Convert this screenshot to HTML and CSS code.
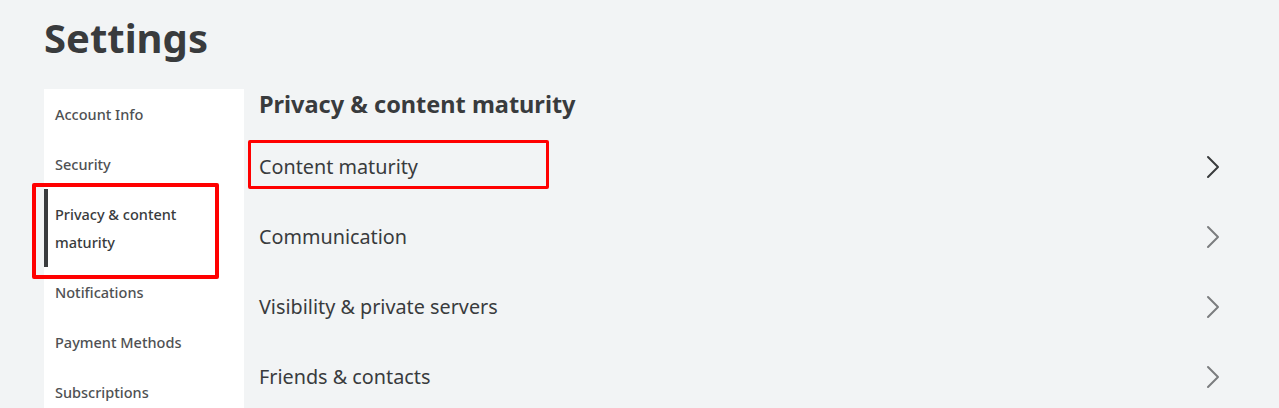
FILE: index.html
```html
<!DOCTYPE html>
<html lang="en">
<head>
  <meta charset="UTF-8" />
  <title>Settings</title>
  <link rel="stylesheet" href="styles.css">
</head>
<body>
  <div class="page">
    <h1 class="title">Settings</h1>

    <div class="layout">
      <ul class="menu">
        <li class="menu-item">Account Info</li>
        <li class="menu-item">Security</li>
        <li class="menu-item active">Privacy &amp; content maturity
          <span class="mark mark-side"></span>
        </li>
        <li class="menu-item">Notifications</li>
        <li class="menu-item">Payment Methods</li>
        <li class="menu-item">Subscriptions</li>
      </ul>

      <div class="main">
        <h2 class="section-title">Privacy &amp; content maturity</h2>

        <div class="row hover">
          <span class="row-label">Content maturity<span class="mark mark-row"></span></span>
          <svg class="chevron" viewBox="0 0 14 24"><path d="M2 2 L12 12 L2 22" /></svg>
        </div>
        <div class="row">
          <span class="row-label">Communication</span>
          <svg class="chevron" viewBox="0 0 14 24"><path d="M2 2 L12 12 L2 22" /></svg>
        </div>
        <div class="row">
          <span class="row-label">Visibility &amp; private servers</span>
          <svg class="chevron" viewBox="0 0 14 24"><path d="M2 2 L12 12 L2 22" /></svg>
        </div>
        <div class="row">
          <span class="row-label">Friends &amp; contacts</span>
          <svg class="chevron" viewBox="0 0 14 24"><path d="M2 2 L12 12 L2 22" /></svg>
        </div>
      </div>
    </div>
  </div>
</body>
</html>
```

FILE: styles.css
```css
body {
  margin: 0;
  font-family: 'Noto Sans', sans-serif;
  background-color: #f2f4f5;
  color: #393b3d;
}

.page {
  padding: 0 44px;
  height: 408px;
  overflow: hidden;
}

.title {
  margin: 14px 0 27px;
  font-size: 40px;
  line-height: 48px;
  font-weight: 700;
}

.layout {
  display: flex;
}

.menu {
  list-style: none;
  margin: 0;
  padding: 0;
  width: 200px;
  flex: none;
  background: #ffffff;
  min-height: 330px;
}

.menu-item {
  position: relative;
  padding: 11px 40px 11px 11px;
  font-size: 14.5px;
  line-height: 28px;
  font-weight: 500;
  color: #4f5153;
}

.menu-item.active {
  color: #393b3d;
  box-shadow: inset 4px 0 0 #393b3d;
}

.main {
  flex: 1;
  padding-left: 15px;
  padding-right: 15px;
}

.section-title {
  margin: 0 0 13px;
  font-size: 23.5px;
  line-height: 30px;
  font-weight: 700;
}

.row {
  display: flex;
  justify-content: space-between;
  align-items: center;
  height: 70px;
}

.row-label {
  position: relative;
  top: -1px;
  font-size: 19.8px;
}

.chevron {
  width: 14px;
  height: 24px;
  fill: none;
  stroke: #7b7d7f;
  stroke-width: 2;
  stroke-linecap: round;
  stroke-linejoin: round;
}

.row.hover .chevron {
  stroke: #393b3d;
}

/* red annotation boxes */
.mark {
  position: absolute;
  border: 4px solid #ff0000;
  border-radius: 2px;
  pointer-events: none;
}

.mark-side {
  left: -12px;
  top: -6px;
  width: 179px;
  height: 88px;
}

.mark-row {
  left: -11px;
  top: -13px;
  width: 295px;
  height: 43px;
  border-width: 3px;
}
```
